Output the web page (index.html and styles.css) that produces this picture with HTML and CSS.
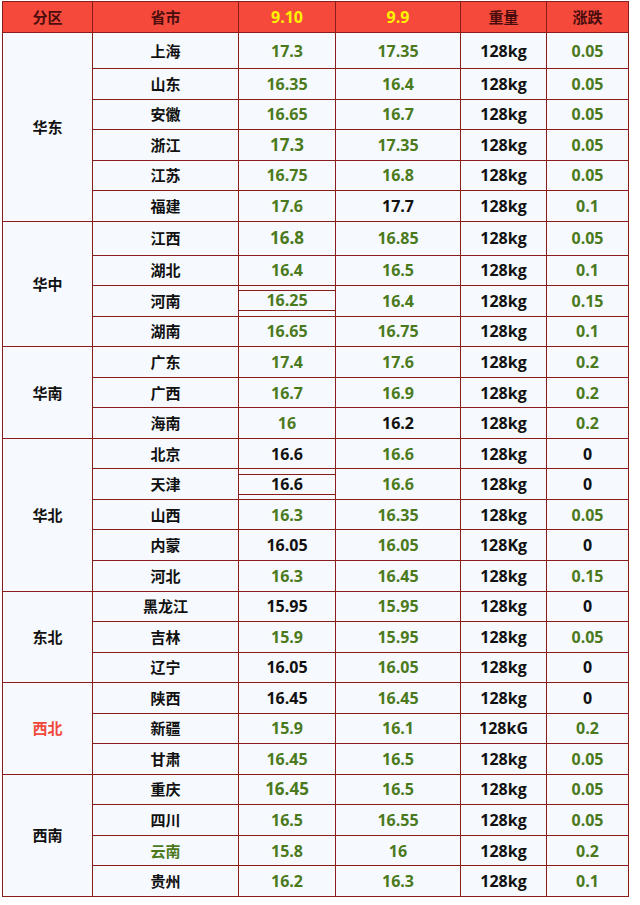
FILE: index.html
```html
<!DOCTYPE html>
<html lang="zh">
<head>
<meta charset="utf-8">
<title>生猪价格</title>
<link rel="stylesheet" href="styles.css">
</head>
<body>
<table class="price">
  <colgroup>
    <col class="c-zone"><col class="c-prov"><col class="c-d1"><col class="c-d2"><col class="c-wt"><col class="c-chg">
  </colgroup>
  <thead>
    <tr class="head">
      <th>分区</th><th>省市</th><th class="date">9.10</th><th class="date">9.9</th><th>重量</th><th>涨跌</th>
    </tr>
  </thead>
  <tbody>
    <tr class="tall1"><td class="zone" rowspan="6">华东</td><td class="prov">上海</td><td class="g">17.3</td><td class="g">17.35</td><td>128kg</td><td class="g">0.05</td></tr>
    <tr><td class="prov">山东</td><td class="g">16.35</td><td class="g">16.4</td><td>128kg</td><td class="g">0.05</td></tr>
    <tr><td class="prov">安徽</td><td class="g">16.65</td><td class="g">16.7</td><td>128kg</td><td class="g">0.05</td></tr>
    <tr><td class="prov">浙江</td><td class="g big">17.3</td><td class="g">17.35</td><td>128kg</td><td class="g">0.05</td></tr>
    <tr><td class="prov">江苏</td><td class="g">16.75</td><td class="g">16.8</td><td>128kg</td><td class="g">0.05</td></tr>
    <tr><td class="prov">福建</td><td class="g">17.6</td><td>17.7</td><td>128kg</td><td class="g">0.1</td></tr>

    <tr class="tall2"><td class="zone" rowspan="4">华中</td><td class="prov">江西</td><td class="g big">16.8</td><td class="g">16.85</td><td>128kg</td><td class="g">0.05</td></tr>
    <tr><td class="prov">湖北</td><td class="g">16.4</td><td class="g">16.5</td><td>128kg</td><td class="g">0.1</td></tr>
    <tr><td class="prov">河南</td><td class="g boxed"><div class="box">16.25</div></td><td class="g">16.4</td><td>128kg</td><td class="g">0.15</td></tr>
    <tr><td class="prov">湖南</td><td class="g">16.65</td><td class="g">16.75</td><td>128kg</td><td class="g">0.1</td></tr>

    <tr><td class="zone" rowspan="3">华南</td><td class="prov">广东</td><td class="g">17.4</td><td class="g">17.6</td><td>128kg</td><td class="g">0.2</td></tr>
    <tr><td class="prov">广西</td><td class="g">16.7</td><td class="g">16.9</td><td>128kg</td><td class="g">0.2</td></tr>
    <tr><td class="prov">海南</td><td class="g">16</td><td>16.2</td><td>128kg</td><td class="g">0.2</td></tr>

    <tr><td class="zone" rowspan="5">华北</td><td class="prov">北京</td><td>16.6</td><td class="g">16.6</td><td>128kg</td><td>0</td></tr>
    <tr><td class="prov">天津</td><td class="boxed"><div class="box">16.6</div></td><td class="g">16.6</td><td>128kg</td><td>0</td></tr>
    <tr><td class="prov">山西</td><td class="g">16.3</td><td class="g">16.35</td><td>128kg</td><td class="g">0.05</td></tr>
    <tr><td class="prov">内蒙</td><td>16.05</td><td class="g">16.05</td><td>128Kg</td><td>0</td></tr>
    <tr><td class="prov">河北</td><td class="g">16.3</td><td class="g">16.45</td><td>128kg</td><td class="g">0.15</td></tr>

    <tr><td class="zone" rowspan="3">东北</td><td class="prov">黑龙江</td><td>15.95</td><td class="g">15.95</td><td>128kg</td><td>0</td></tr>
    <tr><td class="prov">吉林</td><td class="g">15.9</td><td class="g">15.95</td><td>128kg</td><td class="g">0.05</td></tr>
    <tr><td class="prov">辽宁</td><td>16.05</td><td class="g">16.05</td><td>128kg</td><td>0</td></tr>

    <tr><td class="zone red" rowspan="3">西北</td><td class="prov">陕西</td><td>16.45</td><td class="g">16.45</td><td>128kg</td><td>0</td></tr>
    <tr><td class="prov">新疆</td><td class="g">15.9</td><td class="g">16.1</td><td>128kG</td><td class="g">0.2</td></tr>
    <tr><td class="prov">甘肃</td><td class="g">16.45</td><td class="g">16.5</td><td>128kg</td><td class="g">0.05</td></tr>

    <tr><td class="zone" rowspan="4">西南</td><td class="prov">重庆</td><td class="g big">16.45</td><td class="g">16.5</td><td>128kg</td><td class="g">0.05</td></tr>
    <tr><td class="prov">四川</td><td class="g">16.5</td><td class="g">16.55</td><td>128kg</td><td class="g">0.05</td></tr>
    <tr><td class="prov g">云南</td><td class="g">15.8</td><td class="g">16</td><td>128kg</td><td class="g">0.2</td></tr>
    <tr><td class="prov">贵州</td><td class="g">16.2</td><td class="g">16.3</td><td>128kg</td><td class="g">0.1</td></tr>
  </tbody>
</table>
</body>
</html>
```
FILE: styles.css
```css
html, body {
  margin: 0;
  padding: 0;
  background: #ffffff;
}

body {
  padding: 1px 0 0 2px;
  font-family: "Open Sans", "Noto Sans CJK SC", sans-serif;
  font-weight: 700;
  font-size: 16px;
  color: #111111;
}

.price {
  border-collapse: collapse;
  table-layout: fixed;
  width: 626px;
  border: 1px solid #8a1c1c;
}

.c-zone { width: 90px; }
.c-prov { width: 146px; }
.c-d1 { width: 97px; }
.c-d2 { width: 125px; }
.c-wt { width: 86px; }
.c-chg { width: 82px; }

.price th,
.price td {
  border: 1px solid #8a1c1c;
  text-align: center;
  vertical-align: middle;
  padding: 0;
  line-height: 18px;
}

.head th {
  height: 30px;
  background: #f54a3b;
  color: #4a0d0d;
  font-weight: 700;
  font-size: 15px;
  font-family: "Noto Sans CJK SC", "Open Sans", sans-serif;
}

.head th.date {
  font-family: "Open Sans", "Noto Sans CJK SC", sans-serif;
  font-size: 16px;
  color: #fff200;
}

.price td {
  height: 29.54px;
  background: #f6f9fd;
}

.price tr.tall1 td { height: 35px; }
.price tr.tall2 td { height: 33px; }

.price td.prov,
.price td.zone {
  font-size: 15px;
  font-family: "Noto Sans CJK SC", sans-serif;
}

.price td.red { color: #f0483a; }

.g { color: #4b7a1d; }

.price td.big { font-size: 17px; }

.box {
  border: 1px solid #8a1c1c;
  height: 19px;
  line-height: 19px;
  margin: 0 -1px;
}
```
